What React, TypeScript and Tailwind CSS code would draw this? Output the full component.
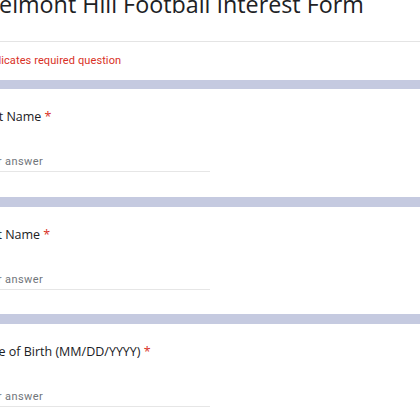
export default function App() {
  const questions = ['First Name', 'Last Name', 'Date of Birth (MM/DD/YYYY)'];

  return (
    <div className="h-[420px] w-[420px] overflow-hidden bg-[#c5cae0]">
      <div className="-ml-[22px] w-[480px]">
        <div className="bg-white">
          <div className="-mt-[12px] h-[54px] border-b border-[#e4e4e4] pl-[6px]">
            <h1 className="text-[23.3px] leading-[32px] text-[#202124]" style={{ fontFamily: '"Open Sans", sans-serif' }}>
              Belmont Hill Football Interest Form
            </h1>
          </div>
          <div className="flex h-[38px] items-center">
            <p className="text-[11px] tracking-[0.1px] text-[#d93025]" style={{ fontFamily: 'Roboto, sans-serif' }}>
              * Indicates required question
            </p>
          </div>
        </div>

        <div className="mt-[9px] flex flex-col gap-[10px]">
          {questions.map((q, i) => (
            <div key={q} className={i === 0 ? 'h-[108px] bg-white pt-[19px]' : 'h-[107px] bg-white pt-[19px]'}>
              <p className="text-[12.5px] leading-[18px] text-[#202124]" style={{ fontFamily: '"Open Sans", sans-serif' }}>
                {q} <span className="text-[#d93025]">*</span>
              </p>
              <div className="mt-[21px] w-[232px] border-b border-[#e6e6e6]">
                <span className="text-[11px] leading-[18px] tracking-[0.4px] text-[#70757a]" style={{ fontFamily: 'Roboto, sans-serif' }}>
                  Your answer
                </span>
              </div>
            </div>
          ))}
        </div>
      </div>
    </div>
  );
}
